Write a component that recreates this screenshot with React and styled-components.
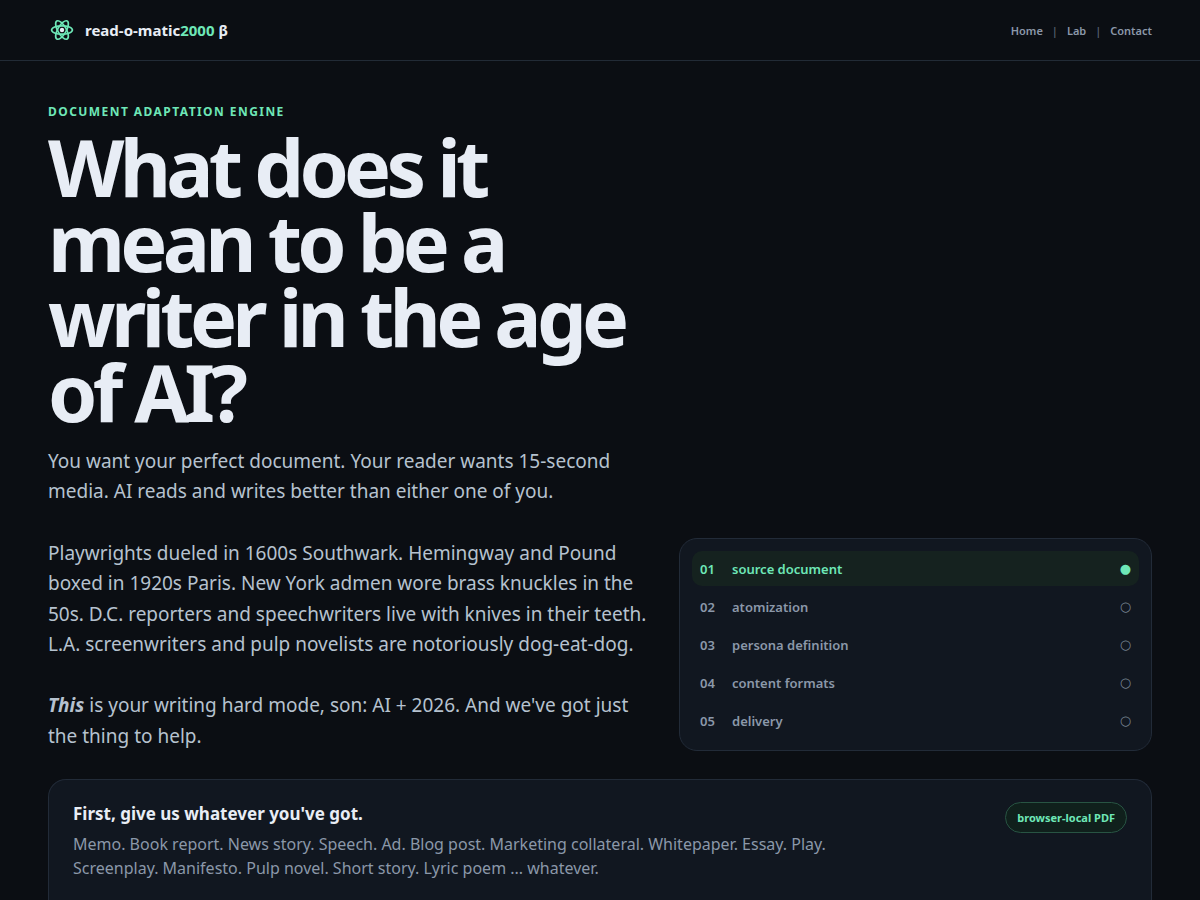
import React from 'react';
import styled, { createGlobalStyle } from 'styled-components';

const GlobalStyle = createGlobalStyle`
  * {
    box-sizing: border-box;
  }

  body {
    margin: 0;
    background: #0b0e13;
    color: #e8edf5;
    font-family: 'Noto Sans', 'Liberation Sans', sans-serif;
  }
`;

const Header = styled.header`
  display: flex;
  align-items: center;
  justify-content: space-between;
  height: 61px;
  padding: 0 48px;
  border-bottom: 1px solid #222b36;
`;

const Brand = styled.a`
  display: flex;
  align-items: center;
  gap: 9px;
  color: #e8edf5;
  font-size: 15px;
  font-weight: 700;
  text-decoration: none;

  em {
    color: #6ee7b7;
    font-style: normal;
  }
`;

const Nav = styled.nav`
  display: flex;
  align-items: center;
  gap: 9px;
  color: #566070;
  font-size: 11px;
  font-weight: 600;

  a {
    color: #8b98a9;
    text-decoration: none;
  }
`;

const Main = styled.main`
  padding: 41px 48px 0;
`;

const Hero = styled.section`
  display: grid;
  grid-template-columns: minmax(0, 599fr) minmax(0, 473fr);
  gap: 32px;
  align-items: end;
`;

const Eyebrow = styled.p`
  margin: 0 0 7px;
  color: #6ee7b7;
  font-size: 12px;
  font-weight: 700;
  letter-spacing: 0.12em;
  line-height: 20px;
  text-transform: uppercase;
`;

const Title = styled.h1`
  margin: 0;
  font-size: 79px;
  font-weight: 700;
  letter-spacing: -0.06em;
  line-height: 75px;
`;

const Lede = styled.div`
  margin-top: 17px;
  color: #b6c2cf;
  font-size: 19px;
  line-height: 1.6;

  p {
    margin: 0 0 31px;
  }

  p:last-child {
    margin-bottom: 0;
  }
`;

const Steps = styled.ol`
  display: grid;
  gap: 3px;
  margin: 0;
  padding: 12px;
  border: 1px solid #222b38;
  border-radius: 18px;
  background: #111720;
  list-style: none;
`;

const Step = styled.li`
  display: grid;
  grid-template-columns: 24px 1fr auto;
  gap: 8px;
  align-items: center;
  height: 35px;
  padding: 0 8px;
  border-radius: 10px;
  background: ${({ $active }) => ($active ? '#15221f' : 'transparent')};
  color: ${({ $active }) => ($active ? '#6ee7b7' : '#8b98a9')};
  font-size: 13px;
  font-weight: 600;
`;

const Marker = styled.span`
  color: ${({ $active }) => ($active ? '#6ee7b7' : '#7a8695')};
  font-family: 'DejaVu Sans', sans-serif;
  font-size: 13px;
  font-weight: 400;
`;

const Card = styled.section`
  display: flex;
  align-items: flex-start;
  justify-content: space-between;
  gap: 24px;
  margin-top: 28px;
  padding: 22px 24px;
  border: 1px solid #222b38;
  border-bottom: 0;
  border-radius: 18px 18px 0 0;
  background: #111720;
`;

const CardTitle = styled.h2`
  margin: 0 0 6px;
  font-size: 17px;
  font-weight: 700;
  line-height: 24px;
`;

const CardText = styled.p`
  max-width: 760px;
  margin: 0;
  color: #8b98a9;
  font-size: 16px;
  line-height: 24px;
`;

const Pill = styled.span`
  flex: none;
  padding: 6px 11px;
  border: 1px solid #285443;
  border-radius: 999px;
  background: #10201c;
  color: #6ee7b7;
  font-size: 11px;
  font-weight: 700;
  line-height: 17px;
`;

const steps = ['source document', 'atomization', 'persona definition', 'content formats', 'delivery'];

const AtomLogo = () => (
  <svg width="28" height="28" viewBox="0 0 28 28" fill="none" aria-hidden="true">
    <g stroke="#6ee7b7" strokeWidth="1.7">
      <ellipse cx="14" cy="14" rx="10.4" ry="4.2" />
      <ellipse cx="14" cy="14" rx="10.4" ry="4.2" transform="rotate(60 14 14)" />
      <ellipse cx="14" cy="14" rx="10.4" ry="4.2" transform="rotate(120 14 14)" />
    </g>
    <circle cx="14" cy="14" r="2.2" fill="#e8edf5" />
  </svg>
);

const App = () => {
  return (
    <>
      <GlobalStyle />
      <Header>
        <Brand href="#">
          <AtomLogo />
          <span>
            read-o-matic<em>2000</em> β
          </span>
        </Brand>
        <Nav>
          <a href="#home">Home</a>
          <span>|</span>
          <a href="#lab">Lab</a>
          <span>|</span>
          <a href="#contact">Contact</a>
        </Nav>
      </Header>
      <Main>
        <Hero>
          <div>
            <Eyebrow>Document adaptation engine</Eyebrow>
            <Title>What does it mean to be a writer in the age of AI?</Title>
            <Lede>
              <p>
                You want your perfect document. Your reader wants 15-second media. AI reads and
                writes better than either one of you.
              </p>
              <p>
                Playwrights dueled in 1600s Southwark. Hemingway and Pound boxed in 1920s Paris.
                New York admen wore brass knuckles in the 50s. D.C. reporters and speechwriters
                live with knives in their teeth. L.A. screenwriters and pulp novelists are
                notoriously dog-eat-dog.
              </p>
              <p>
                <strong>
                  <em>This</em>
                </strong>{' '}
                is your writing hard mode, son: AI + 2026. And we've got just the thing to help.
              </p>
            </Lede>
          </div>
          <Steps>
            {steps.map((step, i) => (
              <Step key={step} $active={i === 0}>
                <span>0{i + 1}</span>
                <span>{step}</span>
                <Marker $active={i === 0}>{i === 0 ? '●' : '○'}</Marker>
              </Step>
            ))}
          </Steps>
        </Hero>
        <Card>
          <div>
            <CardTitle>First, give us whatever you've got.</CardTitle>
            <CardText>
              Memo. Book report. News story. Speech. Ad. Blog post. Marketing collateral.
              Whitepaper. Essay. Play. Screenplay. Manifesto. Pulp novel. Short story. Lyric poem
              ... whatever.
            </CardText>
          </div>
          <Pill>browser-local PDF</Pill>
        </Card>
      </Main>
    </>
  );
};

export default App;
